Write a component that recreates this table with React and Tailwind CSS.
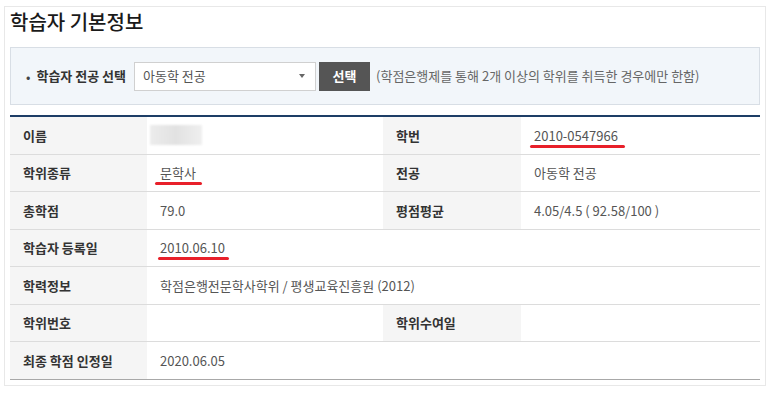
import React from 'react';

const FONT = { fontFamily: '"Noto Sans CJK KR", "Noto Sans", sans-serif' };

const Mark = ({ children, className = '' }) => (
  <span className="relative inline-block">
    {children}
    <span className={`absolute h-[3px] rounded-full bg-[#e8202a] ${className}`} />
  </span>
);

const Label = ({ children }) => (
  <div className="flex items-center bg-[#f5f5f5] pl-[13px] text-[13px] font-bold text-[#333]">
    {children}
  </div>
);

const Value = ({ children, span = false }) => (
  <div className={`flex items-center pl-[13px] text-[13px] text-[#555] ${span ? 'col-span-3' : ''}`}>
    {children}
  </div>
);

const Row = ({ children, last = false }) => (
  <div
    className={`grid h-[37.5px] grid-cols-[137px_236px_138px_237px] border-b ${
      last ? 'border-[#a8a8a8]' : 'border-[#dcdcdc]'
    }`}
  >
    {children}
  </div>
);

export default function App() {
  return (
    <div className="min-h-[394px] bg-white pl-[4px] pt-[6px]" style={FONT}>
      <div className="h-[380px] w-[762px] border border-[#e8e8e8] px-[5px]">
        <h1 className="flex h-[30px] items-center text-[20px] font-medium text-[#1a1a1a]">
          학습자 기본정보
        </h1>

        <div className="mt-[10px] flex h-[58px] items-center border border-[#d8dee5] bg-[#f2f6fa] pl-[15px]">
          <span className="mr-[6px] text-[13px] leading-none text-[#444]">•</span>
          <span className="text-[13px] font-bold text-[#333]">학습자 전공 선택</span>
          <div className="ml-[8px] flex h-[29px] w-[182px] items-center justify-between border border-[#d0d0d0] bg-white pl-[8px] pr-[10px] text-[13px] text-[#555]">
            <span>아동학 전공</span>
            <span className="h-0 w-0 border-x-[3px] border-t-[4px] border-x-transparent border-t-[#666]" />
          </div>
          <button className="ml-[3px] h-[29px] w-[51px] bg-[#555555] text-[13px] font-bold text-white">
            선택
          </button>
          <span className="ml-[6px] text-[13px] text-[#666]">
            (학점은행제를 통해 2개 이상의 학위를 취득한 경우에만 한함)
          </span>
        </div>

        <div className="mt-[10px] border-t-2 border-[#1d3d66]">
          <Row>
            <Label>이름</Label>
            <Value>
              <span className="ml-[-10px] h-[20px] w-[52px] bg-gradient-to-r from-[#ececec] via-[#e2e2e2] to-[#efefef] blur-[1px]" />
            </Value>
            <Label>학번</Label>
            <Value>
              <Mark className="-left-[4px] -right-[7px] top-[19px]">2010-0547966</Mark>
            </Value>
          </Row>
          <Row>
            <Label>학위종류</Label>
            <Value>
              <Mark className="-left-[5px] -right-[6px] top-[19px]">문학사</Mark>
            </Value>
            <Label>전공</Label>
            <Value>아동학 전공</Value>
          </Row>
          <Row>
            <Label>총학점</Label>
            <Value>79.0</Value>
            <Label>평점평균</Label>
            <Value>4.05/4.5 ( 92.58/100 )</Value>
          </Row>
          <Row>
            <Label>학습자 등록일</Label>
            <Value span>
              <Mark className="-left-[2px] -right-[4px] top-[19px]">2010.06.10</Mark>
            </Value>
          </Row>
          <Row>
            <Label>학력정보</Label>
            <Value span>학점은행전문학사학위 / 평생교육진흥원 (2012)</Value>
          </Row>
          <Row>
            <Label>학위번호</Label>
            <Value />
            <Label>학위수여일</Label>
            <Value />
          </Row>
          <Row last>
            <Label>최종 학점 인정일</Label>
            <Value span>2020.06.05</Value>
          </Row>
        </div>
      </div>
    </div>
  );
}
